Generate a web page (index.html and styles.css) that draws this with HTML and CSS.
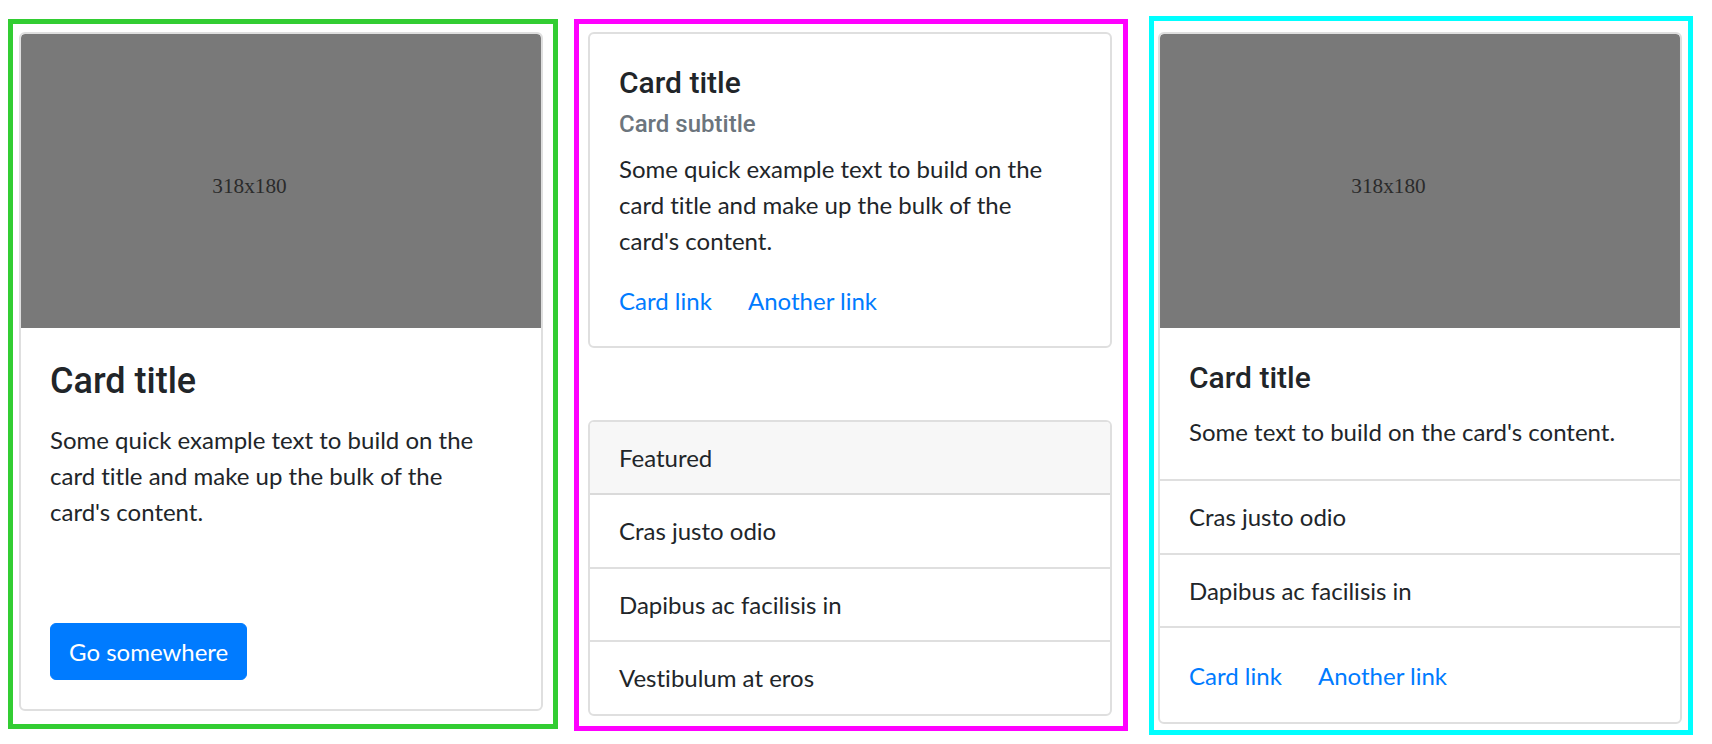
FILE: index.html
```html
<!DOCTYPE html>
<html lang="en">
<head>
  <meta charset="UTF-8">
  <meta name="viewport" content="width=device-width, initial-scale=1.0">
  <title>Cards</title>
  <link rel="stylesheet" href="styles.css">
</head>
<body>
  <div class="row">

    <!-- image card with button -->
    <div class="frame frame-green">
      <div class="card card-tall">
        <svg class="card-img" viewBox="0 0 318 180" xmlns="http://www.w3.org/2000/svg">
          <rect width="318" height="180" fill="#797979"/>
          <text x="117" y="97" class="placeholder-text">318x180</text>
        </svg>
        <div class="card-body card-body-tall">
          <h4 class="card-title title-lg">Card title</h4>
          <p class="card-text">Some quick example text to build on the card title and make up the bulk of the card's content.</p>
          <a href="#" class="btn">Go somewhere</a>
        </div>
      </div>
    </div>

    <!-- text card + list card -->
    <div class="frame frame-magenta">
      <div class="card">
        <div class="card-body card-body-text">
          <h5 class="card-title">Card title</h5>
          <h6 class="card-subtitle">Card subtitle</h6>
          <p class="card-text">Some quick example text to build on the card title and make up the bulk of the card's content.</p>
          <a href="#" class="card-link">Card link</a>
          <a href="#" class="card-link">Another link</a>
        </div>
      </div>
      <div class="card card-spaced">
        <div class="card-header">Featured</div>
        <ul class="list-group list-flush">
          <li class="list-item">Cras justo odio</li>
          <li class="list-item">Dapibus ac facilisis in</li>
          <li class="list-item">Vestibulum at eros</li>
        </ul>
      </div>
    </div>

    <!-- kitchen sink card -->
    <div class="frame frame-cyan">
      <div class="card">
        <svg class="card-img" viewBox="0 0 318 180" xmlns="http://www.w3.org/2000/svg">
          <rect width="318" height="180" fill="#797979"/>
          <text x="117" y="97" class="placeholder-text">318x180</text>
        </svg>
        <div class="card-body card-body-mid">
          <h5 class="card-title">Card title</h5>
          <p class="card-text">Some text to build on the card's content.</p>
        </div>
        <ul class="list-group list-bordered">
          <li class="list-item">Cras justo odio</li>
          <li class="list-item">Dapibus ac facilisis in</li>
        </ul>
        <div class="card-body card-body-links">
          <a href="#" class="card-link">Card link</a>
          <a href="#" class="card-link">Another link</a>
        </div>
      </div>
    </div>

  </div>
</body>
</html>
```
FILE: styles.css
```css
* {
  box-sizing: border-box;
}
body {
  margin: 0;
  font-family: Lato, "Liberation Sans", sans-serif;
  font-size: 24px;
  line-height: 1.5;
  font-variant-ligatures: none;
  color: #212529;
  background: #fff;
}
a {
  color: #007bff;
  text-decoration: none;
}

/* layout */
.row {
  display: flex;
  align-items: flex-start;
  padding-left: 8px;
}
.frame {
  border: 5px solid;
  display: flex;
  flex-direction: column;
}
.frame-green {
  border-color: #32cd32;
  margin-top: 19px;
  padding: 8px 10px 13px 6px;
}
.frame-magenta {
  border-color: #ff00ff;
  margin-top: 19px;
  margin-left: 16px;
  padding: 8px 11px 10.5px 9px;
}
.frame-cyan {
  border-color: #00ffff;
  margin-top: 16px;
  margin-left: 21px;
  padding: 11px 6px 5.7px 4px;
}

/* card */
.card {
  width: 524px;
  display: flex;
  flex-direction: column;
  background: #fff;
  border: 2px solid #dfdfdf;
  border-radius: 6px;
  overflow: hidden;
}
.card-tall {
  height: 679px;
}
.card-spaced {
  margin-top: 72.5px;
}
.card-img {
  display: block;
  width: 100%;
  height: auto;
  border-radius: 4px 4px 0 0;
}
.placeholder-text {
  font-family: "Liberation Serif", serif;
  font-size: 13px;
  fill: #2b2b2b;
}
.card-body {
  padding: 30px 29px;
}
.card-body-tall {
  flex: 1;
  display: flex;
  flex-direction: column;
  align-items: flex-start;
  padding: 32px 29px 29px;
}
.card-body-text {
  padding: 31px 29px 27px;
}
.card-body-mid {
  padding: 31.5px 29px 29.5px;
}
.card-body-links {
  padding: 30px 29px 28px;
}
.card-title {
  margin: 0 0 18px;
  font-family: Roboto, Lato, sans-serif;
  font-size: 30px;
  font-weight: 500;
  line-height: 1.2;
}
.title-lg {
  font-size: 36px;
}
.card-subtitle {
  margin: -9px 0 12px;
  font-family: Roboto, Lato, sans-serif;
  font-size: 24px;
  font-weight: 500;
  line-height: 1.2;
  color: #6c757d;
}
.card-text {
  max-width: 432px;
  margin: 0 0 24px;
}
.card-text:last-child {
  margin-bottom: 0;
}
.card-link + .card-link {
  margin-left: 30px;
}

.btn {
  margin-top: auto;
  display: inline-block;
  padding: 9.5px 18px;
  line-height: 36px;
  color: #fff;
  background-color: #007bff;
  border: 1px solid #007bff;
  border-radius: 6px;
}

/* header + lists */
.card-header {
  padding: 17.5px 29px;
  background-color: #f7f7f7;
  border-bottom: 2px solid #dadada;
}
.list-group {
  list-style: none;
  margin: 0;
  padding: 0;
}
.list-item {
  padding: 17.75px 29px;
  border-bottom: 2px solid #dfdfdf;
}
.list-flush .list-item:last-child {
  border-bottom: 0;
}
.list-bordered {
  border-top: 2px solid #dfdfdf;
}
```
